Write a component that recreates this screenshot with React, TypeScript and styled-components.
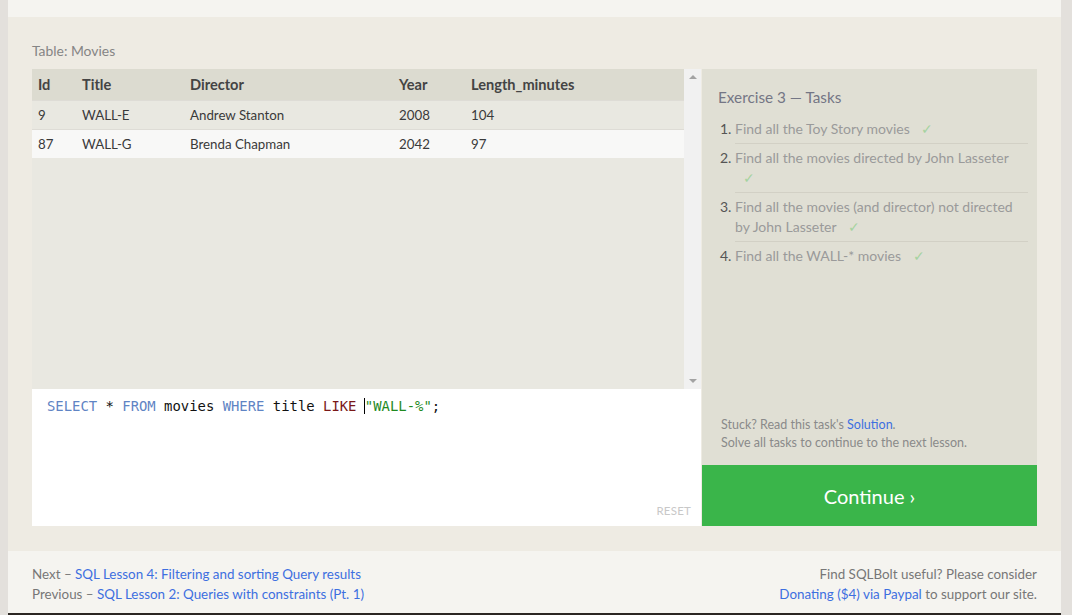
import React from "react";
import styled, { createGlobalStyle } from "styled-components";

const Global = createGlobalStyle`
  html, body { margin: 0; padding: 0; }
  body {
    background: #e3e0dc;
    font-family: Lato, "Open Sans", sans-serif;
    height: 615px;
    overflow: hidden;
  }
  #root { padding: 0 11px 0 8px; }
`;

const Page = styled.div`
  display: flex;
  flex-direction: column;
  background: #f5f4f0;
`;

const TopStrip = styled.div`
  height: 17px;
  background: #f5f4f0;
`;

const Exercise = styled.section`
  background: #eeebe3;
  padding: 25px 24px 25px 24px;
`;

const TableLabel = styled.div`
  font-size: 13.9px;
  color: #858585;
  line-height: 18px;
  margin-bottom: 9px;
`;

const Workspace = styled.div`
  display: flex;
  align-items: stretch;
`;

const LeftCol = styled.div`
  width: 669px;
  display: flex;
  flex-direction: column;
`;

const TableArea = styled.div`
  height: 320px;
  display: flex;
  background: #e9e8e1;
`;

const TableScroll = styled.div`
  flex: 1;
`;

const Table = styled.table`
  width: 100%;
  table-layout: fixed;
  border-collapse: collapse;
  font-size: 13.3px;
  color: #333;
`;

const Th = styled.th<{ $w?: number }>`
  box-sizing: border-box;
  ${(p) => (p.$w ? `width: ${p.$w}px;` : "")}
  text-align: left;
  font-weight: 700;
  font-size: 14.6px;
  background: #dcdbd0;
  height: 31px;
  padding: 0 6px;
  color: #444;
`;

const Tr = styled.tr<{ $alt?: boolean }>`
  background: ${(p) => (p.$alt ? "#f8f8f7" : "#e9e8e1")};
  border-top: 1px solid #dedcd6;
`;

const Td = styled.td`
  height: 28px;
  padding: 0 6px;
  color: #3a3a3a;
`;

const Scrollbar = styled.div`
  width: 17px;
  background: #f1f1f1;
  display: flex;
  flex-direction: column;
  justify-content: space-between;
  align-items: center;
  padding: 6px 0;
  box-sizing: border-box;
`;

const Arrow = styled.div<{ $down?: boolean }>`
  width: 0;
  height: 0;
  border-left: 4px solid transparent;
  border-right: 4px solid transparent;
  ${(p) =>
    p.$down
      ? "border-top: 4px solid #a3a3a3;"
      : "border-bottom: 4px solid #a3a3a3;"}
`;

const Editor = styled.div`
  height: 137px;
  background: #fff;
  position: relative;
  padding: 8px 15px;
  box-sizing: border-box;
`;

const Code = styled.div`
  font-family: "DejaVu Sans Mono", "Liberation Mono", monospace;
  font-size: 13.9px;
  line-height: 18px;
  color: #111;
  white-space: pre;
`;

const Kw = styled.span`
  color: #5f84c4;
`;
const Op = styled.span`
  color: #7a1818;
`;
const Str = styled.span`
  color: #1f8a1f;
`;
const Caret = styled.span`
  border-left: 1px solid #000;
  margin-left: -1px;
`;

const Reset = styled.div`
  position: absolute;
  right: 10px;
  bottom: 9px;
  font-size: 11.5px;
  color: #c8c8c8;
  letter-spacing: 0.2px;
`;

const RightCol = styled.div`
  width: 335px;
  margin-left: 1px;
  display: flex;
  flex-direction: column;
`;

const Tasks = styled.div`
  flex: 1;
  background: #e0dfd4;
  padding: 16px 9px 13px 16px;
  display: flex;
  flex-direction: column;
`;

const TasksTitle = styled.div`
  font-size: 15.3px;
  line-height: 24px;
  color: #747685;
  margin-bottom: 6px;
`;

const List = styled.ol`
  margin: 0;
  padding: 0 0 0 17px;
  flex: 1;
`;

const Item = styled.li`
  font-size: 14px;
  line-height: 20px;
  color: #9a9a9a;
  padding: 4px 0;
  border-bottom: 1px solid #d2d0c5;
  &:last-child { border-bottom: none; }
  &::marker { color: #555; }
`;

const Check = styled.span`
  color: #a5d3a0;
  margin-left: 8px;
`;

const Stuck = styled.div`
  font-size: 12.5px;
  line-height: 18px;
  color: #8a8a8a;
  padding-left: 3px;
`;

const Link = styled.a`
  color: #3d6fe0;
  text-decoration: none;
`;

const ContinueBtn = styled.div`
  height: 61px;
  background: #3ab54a;
  color: #fff;
  font-size: 20px;
  display: flex;
  align-items: center;
  justify-content: center;
`;

const Footer = styled.footer`
  display: flex;
  justify-content: space-between;
  padding: 13px 24px 9px 24px;
  font-size: 13.4px;
  line-height: 20px;
  color: #777;
  background: #f5f4f0;
`;

const FooterRight = styled.div`
  text-align: right;
`;

const Dark = styled.div`
  height: 2px;
  background: #2b2622;
`;

const rows = [
  ["9", "WALL-E", "Andrew Stanton", "2008", "104"],
  ["87", "WALL-G", "Brenda Chapman", "2042", "97"],
];

const cols: [string, number | undefined][] = [
  ["Id", 44],
  ["Title", 108],
  ["Director", 209],
  ["Year", 72],
  ["Length_minutes", undefined],
];

export default function App() {
  return (
    <>
      <Global />
      <Page>
        <TopStrip />
        <Exercise>
          <TableLabel>Table: Movies</TableLabel>
          <Workspace>
            <LeftCol>
              <TableArea>
                <TableScroll>
                  <Table>
                    <thead>
                      <tr>
                        {cols.map(([c, w]) => (
                          <Th key={c} $w={w}>
                            {c}
                          </Th>
                        ))}
                      </tr>
                    </thead>
                    <tbody>
                      {rows.map((r, i) => (
                        <Tr key={i} $alt={i === 1}>
                          {r.map((c, j) => (
                            <Td key={j}>{c}</Td>
                          ))}
                        </Tr>
                      ))}
                    </tbody>
                  </Table>
                </TableScroll>
                <Scrollbar>
                  <Arrow />
                  <Arrow $down />
                </Scrollbar>
              </TableArea>
              <Editor>
                <Code>
                  <Kw>SELECT</Kw> * <Kw>FROM</Kw> movies <Kw>WHERE</Kw> title{" "}
                  <Op>LIKE</Op> <Caret />
                  <Str>"WALL-%"</Str>;
                </Code>
                <Reset>RESET</Reset>
              </Editor>
            </LeftCol>
            <RightCol>
              <Tasks>
                <TasksTitle>Exercise 3 — Tasks</TasksTitle>
                <List>
                  <Item>
                    Find all the Toy Story movies <Check>✓</Check>
                  </Item>
                  <Item>
                    Find all the movies directed by John Lasseter{" "}
                    <Check>✓</Check>
                  </Item>
                  <Item>
                    Find all the movies (and director) not directed by John
                    Lasseter <Check>✓</Check>
                  </Item>
                  <Item>
                    Find all the WALL-* movies <Check>✓</Check>
                  </Item>
                </List>
                <Stuck>
                  Stuck? Read this task's <Link href="#">Solution</Link>.
                  <br />
                  Solve all tasks to continue to the next lesson.
                </Stuck>
              </Tasks>
              <ContinueBtn>Continue ›</ContinueBtn>
            </RightCol>
          </Workspace>
        </Exercise>
        <Footer>
          <div>
            Next – <Link href="#">SQL Lesson 4: Filtering and sorting Query results</Link>
            <br />
            Previous – <Link href="#">SQL Lesson 2: Queries with constraints (Pt. 1)</Link>
          </div>
          <FooterRight>
            Find SQLBolt useful? Please consider
            <br />
            <Link href="#">Donating ($4) via Paypal</Link> to support our site.
          </FooterRight>
        </Footer>
        <Dark />
      </Page>
    </>
  );
}
